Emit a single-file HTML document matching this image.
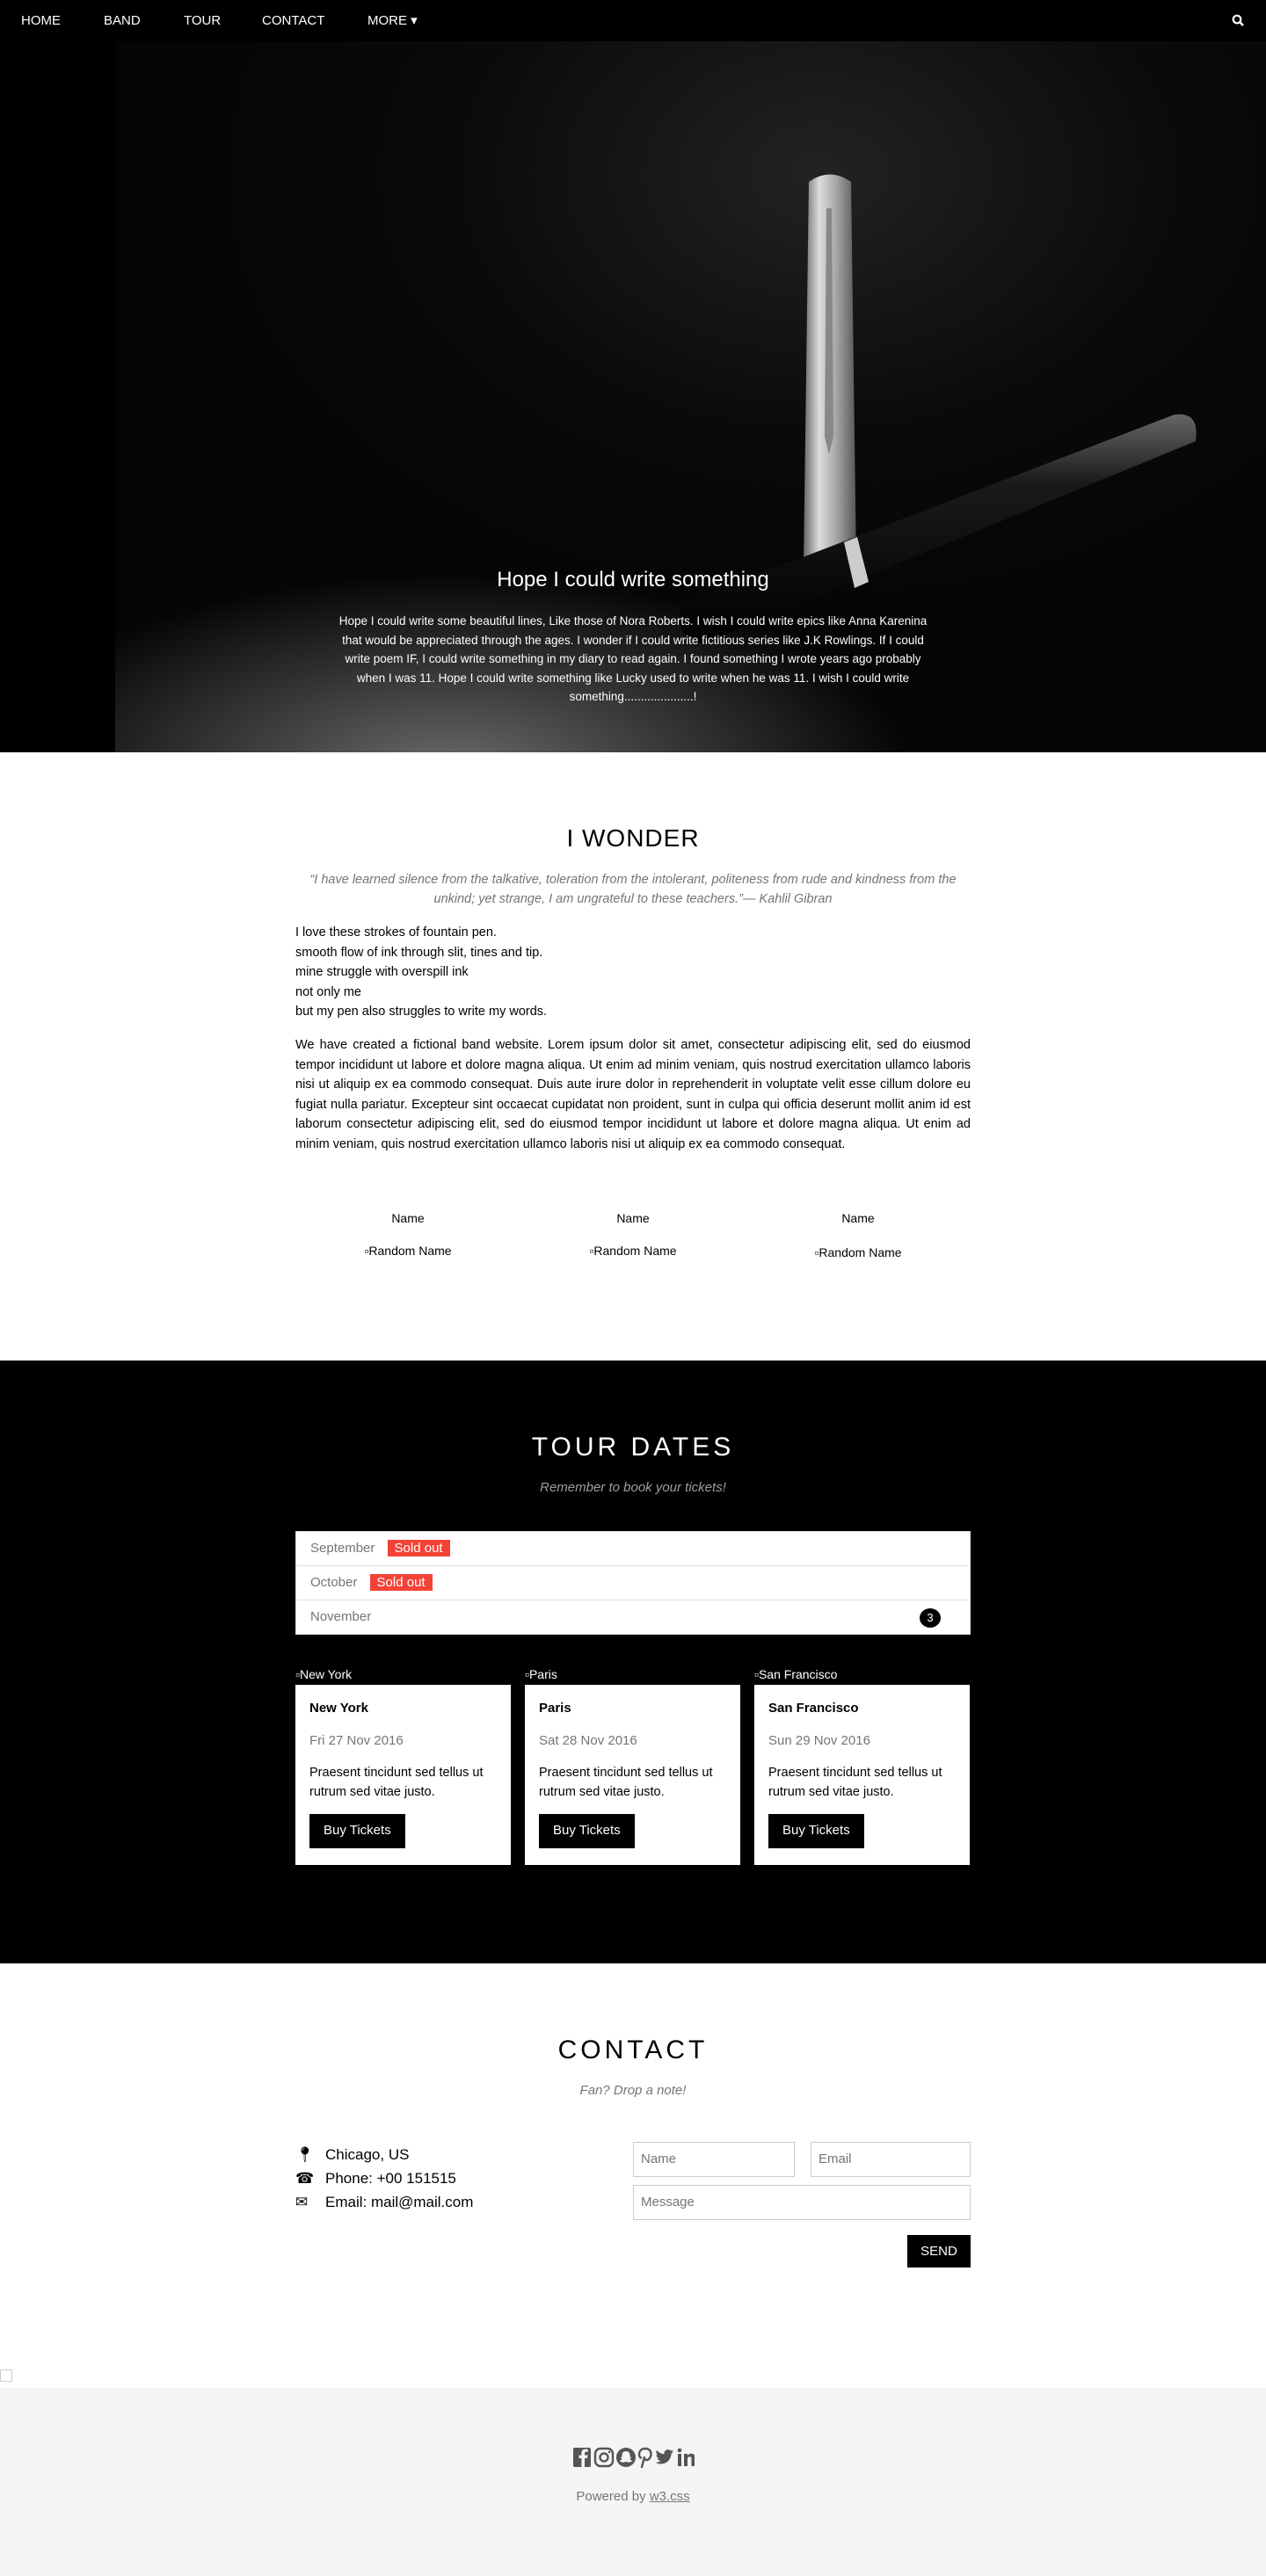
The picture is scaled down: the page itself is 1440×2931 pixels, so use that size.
<!DOCTYPE html>
<html><head><meta charset="utf-8">
<style>
*{box-sizing:border-box}
body{margin:0;font-family:"Liberation Sans",sans-serif;font-size:15px;line-height:1.5;color:#000;background:#fff}
.nav{position:absolute;top:0;left:0;width:1440px;height:47px;background:#000;color:#fff;z-index:5}
.nav span{position:absolute;top:13px;font-size:15px}
.hero{position:absolute;top:47px;left:0;width:1440px;height:809px;background:#000;overflow:hidden}
.abs{position:absolute}
.c{text-align:center}
.sec{position:absolute;left:0;width:1440px}
.card{position:absolute;top:1917px;width:245px;height:205px;background:#fff;padding:0 16px}
.btn{display:inline-block;background:#000;color:#fff;padding:8px 16px;font-size:15px}
.inp{position:absolute;border:1px solid #ccc;height:40px;color:#757575;padding:8px;font-size:15px}
</style></head><body>
<div class="nav">
<span style="left:24px">HOME</span><span style="left:118px">BAND</span><span style="left:209px">TOUR</span><span style="left:298px">CONTACT</span><span style="left:418px">MORE ▾</span>
<svg class="abs" style="left:1401px;top:16px" width="14" height="14" viewBox="0 0 14 14"><circle cx="6" cy="6" r="4.3" fill="none" stroke="#fff" stroke-width="2.2"/><path d="M9 9l4 4" stroke="#fff" stroke-width="2.5"/></svg>
</div>
<div class="hero">
<div class="abs" style="left:131px;top:0;width:1309px;height:809px;background:radial-gradient(ellipse 700px 300px at 380px 830px,#6a6a6a 0%,#3a3a3a 35%,rgba(0,0,0,0) 75%),radial-gradient(ellipse 700px 500px at 800px 150px,#222 0%,#0a0a0a 60%,#050505 100%)"></div>
<svg class="abs" style="left:0;top:0" width="1440" height="809">
<defs><linearGradient id="cap" x1="0" x2="1"><stop offset="0" stop-color="#666"/><stop offset=".3" stop-color="#ddd"/><stop offset=".6" stop-color="#aaa"/><stop offset="1" stop-color="#555"/></linearGradient>
<linearGradient id="bd" x1="0" y1="0" x2="0" y2="1"><stop offset="0" stop-color="#666"/><stop offset=".3" stop-color="#1a1a1a"/><stop offset="1" stop-color="#000"/></linearGradient></defs>
<path d="M920 160 Q944 143 968 160 L974 595 Q944 605 914 595 Z" fill="url(#cap)"/>
<path d="M940 190 L946 190 L948 450 L943 470 L938 450 Z" fill="#888"/>
<path d="M775 640 L1335 425 Q1365 420 1360 455 L800 685 Q765 680 775 640 Z" fill="url(#bd)"/>
<path d="M960 570 L975 564 L988 615 L972 622 Z" fill="#ccc"/>
</svg>
<div class="abs c" style="left:370px;top:595px;width:700px;color:#fff;font-size:24px">Hope I could write something</div>
<div class="abs c" style="left:380px;top:649px;width:680px;color:#fff;font-size:13.5px;line-height:21.5px">Hope I could write some beautiful lines, Like those of Nora Roberts. I wish I could write epics like Anna Karenina that would be appreciated through the ages. I wonder if I could write fictitious series like J.K Rowlings. If I could write poem IF, I could write something in my diary to read again. I found something I wrote years ago probably when I was 11. Hope I could write something like Lucky used to write when he was 11. I wish I could write something.....................!</div>
</div>

<div class="abs c" style="left:0;top:933px;width:1440px;font-size:28px;letter-spacing:1px">I WONDER</div>
<div class="abs c" style="left:336px;top:990px;width:768px;color:#757575;font-style:italic;font-size:14.5px;line-height:22px">“I have learned silence from the talkative, toleration from the intolerant, politeness from rude and kindness from the unkind; yet strange, I am ungrateful to these teachers.”— Kahlil Gibran</div>
<div class="abs" style="left:336px;top:1050px;font-size:14.5px;line-height:22.5px">I love these strokes of fountain pen.<br>smooth flow of ink through slit, tines and tip.<br>mine struggle with overspill ink<br>not only me<br>but my pen also struggles to write my words.</div>
<div class="abs" style="left:336px;top:1178px;width:768px;font-size:14.5px;line-height:22.5px;text-align:justify">We have created a fictional band website. Lorem ipsum dolor sit amet, consectetur adipiscing elit, sed do eiusmod tempor incididunt ut labore et dolore magna aliqua. Ut enim ad minim veniam, quis nostrud exercitation ullamco laboris nisi ut aliquip ex ea commodo consequat. Duis aute irure dolor in reprehenderit in voluptate velit esse cillum dolore eu fugiat nulla pariatur. Excepteur sint occaecat cupidatat non proident, sunt in culpa qui officia deserunt mollit anim id est laborum consectetur adipiscing elit, sed do eiusmod tempor incididunt ut labore et dolore magna aliqua. Ut enim ad minim veniam, quis nostrud exercitation ullamco laboris nisi ut aliquip ex ea commodo consequat.</div>
<div class="abs c" style="left:336px;top:1376px;width:256px;font-size:14px">Name</div>
<div class="abs c" style="left:592px;top:1376px;width:256px;font-size:14px">Name</div>
<div class="abs c" style="left:848px;top:1376px;width:256px;font-size:14px">Name</div>
<div class="abs c" style="left:336px;top:1413px;width:256px;font-size:14px">▫Random Name</div>
<div class="abs c" style="left:592px;top:1413px;width:256px;font-size:14px">▫Random Name</div>
<div class="abs c" style="left:848px;top:1415px;width:256px;font-size:14px">▫Random Name</div>

<div class="sec" style="top:1548px;height:686px;background:#000"></div>
<div class="abs c" style="left:0;top:1624px;width:1440px;color:#fff;font-size:30px;letter-spacing:4px">TOUR DATES</div>
<div class="abs c" style="left:0;top:1682px;width:1440px;color:#9e9e9e;font-style:italic;font-size:15px">Remember to book your tickets!</div>
<div class="abs" style="left:336px;top:1742px;width:768px;height:118px;background:#fff;border:1px solid #ddd">
<div style="height:39px;border-bottom:1px solid #ddd;padding:8px 16px;color:#757575;font-size:15px">September <span style="background:#f44336;color:#fff;padding:1px 8px;margin-left:10px">Sold out</span></div>
<div style="height:39px;border-bottom:1px solid #ddd;padding:8px 16px;color:#757575;font-size:15px">October <span style="background:#f44336;color:#fff;padding:1px 8px;margin-left:10px">Sold out</span></div>
<div style="height:38px;padding:8px 16px;color:#757575;font-size:15px;position:relative">November <span style="position:absolute;right:33px;top:9px;width:24px;height:22px;border-radius:50%;background:#000;color:#fff;text-align:center;font-size:13px;line-height:22px">3</span></div>
</div>
<div class="abs" style="left:336px;top:1895px;color:#fff;font-size:14px">▫New York</div>
<div class="abs" style="left:597px;top:1895px;color:#fff;font-size:14px">▫Paris</div>
<div class="abs" style="left:858px;top:1895px;color:#fff;font-size:14px">▫San Francisco</div>
<div class="card" style="left:336px"><div style="margin-top:16px;font-weight:bold;font-size:15px">New York</div><div style="margin-top:14px;color:#757575">Fri 27 Nov 2016</div><div style="margin-top:14px;font-size:14.5px;line-height:22px">Praesent tincidunt sed tellus ut rutrum sed vitae justo.</div><div class="btn" style="margin-top:14px">Buy Tickets</div></div>
<div class="card" style="left:597px"><div style="margin-top:16px;font-weight:bold;font-size:15px">Paris</div><div style="margin-top:14px;color:#757575">Sat 28 Nov 2016</div><div style="margin-top:14px;font-size:14.5px;line-height:22px">Praesent tincidunt sed tellus ut rutrum sed vitae justo.</div><div class="btn" style="margin-top:14px">Buy Tickets</div></div>
<div class="card" style="left:858px"><div style="margin-top:16px;font-weight:bold;font-size:15px">San Francisco</div><div style="margin-top:14px;color:#757575">Sun 29 Nov 2016</div><div style="margin-top:14px;font-size:14.5px;line-height:22px">Praesent tincidunt sed tellus ut rutrum sed vitae justo.</div><div class="btn" style="margin-top:14px">Buy Tickets</div></div>

<div class="abs c" style="left:0;top:2310px;width:1440px;font-size:30px;letter-spacing:4px">CONTACT</div>
<div class="abs c" style="left:0;top:2368px;width:1440px;color:#757575;font-style:italic;font-size:15px">Fan? Drop a note!</div>
<div class="abs" style="left:336px;top:2438px;font-size:17px;line-height:27px">
<div><span style="display:inline-block;width:34px">📍︎</span>Chicago, US</div>
<div><span style="display:inline-block;width:34px">☎︎</span>Phone: +00 151515</div>
<div><span style="display:inline-block;width:34px">✉︎</span>Email: mail@mail.com</div>
</div>
<div class="inp" style="left:720px;top:2437px;width:184px">Name</div>
<div class="inp" style="left:922px;top:2437px;width:182px">Email</div>
<div class="inp" style="left:720px;top:2486px;width:384px">Message</div>
<div class="abs" style="left:1032px;top:2543px;width:72px;height:37px;background:#000;color:#fff;text-align:center;line-height:37px;font-size:15px">SEND</div>
<div class="abs" style="left:0;top:2696px;width:14px;height:14px;border:1px solid #ccc"></div>

<div class="sec" style="top:2717px;height:214px;background:#f5f5f5"></div>
<div class="abs c" style="left:0;top:2783px;width:1440px;color:#555;font-size:22px;letter-spacing:3px">
<svg width="140" height="26" viewBox="0 0 140 26"><rect x="2" y="2" width="20" height="22" rx="2" fill="#555"/><path d="M15 24V14h3l.5-3.5H15V8.5c0-1 .3-1.7 1.8-1.7h1.9V3.8c-.4 0-1.5-.2-2.8-.2-2.7 0-4.5 1.6-4.5 4.6v2.4H8.5V14H11.4v10z" fill="#f5f5f5"/><rect x="27" y="3" width="20" height="20" rx="6" fill="none" stroke="#555" stroke-width="2.4"/><circle cx="37" cy="13" r="4.5" fill="none" stroke="#555" stroke-width="2.4"/><circle cx="43" cy="7" r="1.3" fill="#555"/><circle cx="62" cy="13" r="11" fill="#555"/><path d="M62 6c3 0 4.5 2 4.5 4.5v2l2 .5-2 1.5c1 2 2.5 2.5 3 3-1.5.7-3 .5-4 1.5-1-.5-2.5-1-3.5-1s-2.5.5-3.5 1c-1-1-2.5-.8-4-1.5.5-.5 2-1 3-3l-2-1.5 2-.5v-2C57.5 8 59 6 62 6z" fill="#f5f5f5"/><path d="M80 24l3-11M84 3c-5 0-7 3.5-7 6.5 0 2 1 3.5 2 4M84 3c4.5 0 6.5 3 6.5 6 0 4-2.5 7-5 7-2 0-3-1.5-2.5-3" fill="none" stroke="#555" stroke-width="2.4" stroke-linecap="round"/><path d="M116 6c-.8.4-1.6.6-2.4.7.9-.5 1.5-1.3 1.8-2.3-.8.5-1.7.8-2.7 1-1.6-1.7-4.4-1.7-6 0-1 1-1.4 2.5-1.1 3.9-3.4-.2-6.5-1.8-8.6-4.4-1.1 1.9-.5 4.3 1.3 5.5-.7 0-1.3-.2-1.9-.5 0 2 1.4 3.7 3.3 4.1-.6.2-1.2.2-1.9.1.5 1.7 2.1 2.8 3.8 2.9-1.7 1.3-3.9 2-6 1.7 1.9 1.2 4 1.800 6.300 1.800 7.500 0 11.700-6.300 11.600-11.700.800-.600 1.500-1.300 2-2.100z" fill="#555"/><rect x="121" y="9" width="4" height="14" fill="#555"/><circle cx="123" cy="5" r="2.3" fill="#555"/><path d="M128 9h4v2c1-1.5 2.5-2.3 4.3-2.3 3 0 4.2 1.8 4.2 5v9.3h-4v-8c0-1.7-.5-2.700-2-2.700s-2.500 1-2.500 2.800V23h-4z" fill="#555"/></svg>
</div>
<div class="abs c" style="left:0;top:2830px;width:1440px;color:#757575;font-size:15px">Powered by <u>w3.css</u></div>
</body></html>
